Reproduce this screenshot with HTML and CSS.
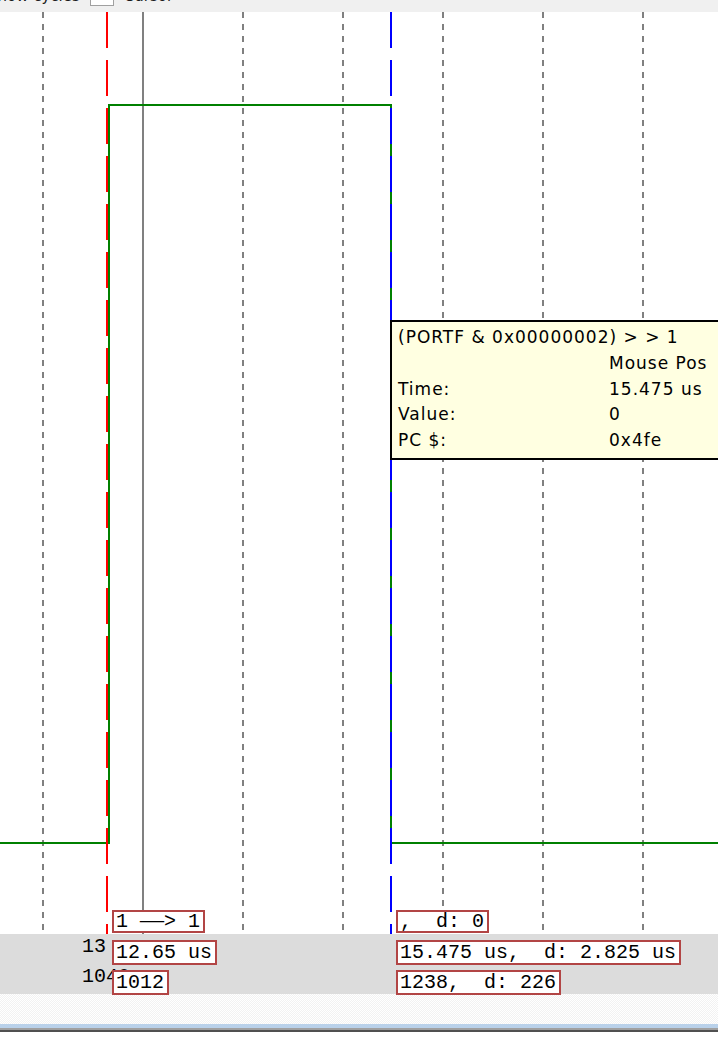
FILE: index.html
```html
<!DOCTYPE html>
<html>
<head>
<meta charset="utf-8">
<link rel="stylesheet" href="styles.css">
</head>
<body>
<div class="screen">
  <div class="toolbar">
    <span class="tb-label tb-first">Show cycles</span>
    <span class="tb-check"></span>
    <span class="tb-label">Cursor</span>
  </div>
  <div class="scope">
    <div class="wave">
      <svg class="wave-svg" width="718" height="922" viewBox="0 0 718 922">
        <g stroke="#808080" stroke-width="2" stroke-dasharray="6 6">
          <line x1="43" y1="0" x2="43" y2="922"/>
          <line x1="243" y1="0" x2="243" y2="922"/>
          <line x1="343" y1="0" x2="343" y2="922"/>
          <line x1="443" y1="0" x2="443" y2="922"/>
          <line x1="543" y1="0" x2="543" y2="922"/>
          <line x1="643" y1="0" x2="643" y2="922"/>
        </g>
        <line x1="143" y1="0" x2="143" y2="922" stroke="#808080" stroke-width="2"/>
        <polyline points="0,831 109,831 109,93 391,93 391,831 718,831" fill="none" stroke="#008000" stroke-width="2"/>
        <line x1="107" y1="0" x2="107" y2="922" stroke="#ff0000" stroke-width="2" stroke-dasharray="36 12"/>
        <line x1="391" y1="0" x2="391" y2="922" stroke="#0000ff" stroke-width="2" stroke-dasharray="36 12"/>
      </svg>
    </div>
    <div class="band"></div>

    <div class="axis-num num-time">13</div>
    <div class="axis-num num-cycle">1040</div>

    <div class="tag tag-left tag-row1">1 <span class="wide">—</span>&gt; 1</div>
    <div class="tag tag-left tag-row2">12.65 us</div>
    <div class="tag tag-left tag-row3">1012</div>

    <div class="tag tag-right tag-row1">,  d: 0</div>
    <div class="tag tag-right tag-row2">15.475 us,  d: 2.825 us</div>
    <div class="tag tag-right tag-row3">1238,  d: 226</div>

    <div class="tooltip">
      <div class="tt-title">(PORTF &amp; 0x00000002) &gt; &gt; 1</div>
      <div class="tt-key"></div><div class="tt-val">Mouse Pos</div>
      <div class="tt-key">Time:</div><div class="tt-val">15.475 us</div>
      <div class="tt-key">Value:</div><div class="tt-val">0</div>
      <div class="tt-key">PC $:</div><div class="tt-val">0x4fe</div>
    </div>
  </div>
  <div class="pattern"></div>
  <div class="frame">
    <div class="frame-blue"></div>
    <div class="frame-grey"></div>
    <div class="frame-dark"></div>
  </div>
</div>
</body>
</html>
```

FILE: styles.css
```css
html, body {
  margin: 0;
  padding: 0;
  background: #ffffff;
}
.screen {
  width: 718px;
  height: 1040px;
  overflow: hidden;
  display: flex;
  flex-direction: column;
}
.toolbar {
  height: 12px;
  flex: none;
  background: #f0f0f0;
  overflow: hidden;
  display: flex;
  align-items: flex-start;
  font-family: "DejaVu Sans", sans-serif;
  font-size: 15px;
  color: #1a1a1a;
}
.tb-label {
  line-height: 18px;
  margin-top: -13px;
}
.tb-first {
  margin-left: -12px;
}
.tb-check {
  width: 22px;
  height: 14px;
  margin: -9px 10px 0 10px;
  background: #ffffff;
  border: 1px solid #a0a0a0;
  border-top: 0;
}
.scope {
  position: relative;
  flex: none;
  display: flex;
  flex-direction: column;
}
.wave {
  height: 922px;
  background: #ffffff;
}
.wave-svg {
  display: block;
}
.band {
  height: 60px;
  background: #dcdcdc;
}
.axis-num, .tag {
  position: absolute;
  font-family: "Liberation Mono", monospace;
  font-size: 20px;
  line-height: 21px;
  white-space: pre;
  color: #000000;
}
.axis-num {
  left: 82px;
}
.num-time { top: 924px; }
.num-cycle { top: 954px; }
.tag {
  background: #ffffff;
  border: 2px solid #b24545;
  padding: 0 3px 0 2px;
}
.tag-left { left: 112px; }
.tag-right { left: 396px; }
.tag-row1 { top: 898px; height: 19px; line-height: 19px; }
.tag-row2 { top: 928px; }
.tag-row3 { top: 958px; }
.wide {
  display: inline-block;
  width: 24px;
  transform: scaleX(2);
  transform-origin: left center;
}
.tooltip {
  position: absolute;
  left: 390px;
  top: 308px;
  width: 360px;
  height: 133px;
  background: #ffffe1;
  border: 2px solid #000000;
  padding: 3px 0 0 6px;
  display: grid;
  grid-template-columns: 211px 1fr;
  grid-auto-rows: 25.8px;
  font-family: "DejaVu Sans", sans-serif;
  font-size: 17px;
  letter-spacing: 1px;
  line-height: 25.8px;
  color: #000000;
  white-space: nowrap;
}
.tt-title {
  grid-column: 1 / 3;
}
.pattern {
  height: 30px;
  flex: none;
  background: repeating-conic-gradient(#f2f2f2 0 25%, #ffffff 0 50%) 0 0 / 2px 2px;
}
.frame {
  flex: none;
  display: flex;
  flex-direction: column;
}
.frame-blue { height: 4px; background: #b9d1ea; }
.frame-grey { height: 2px; background: #a0a0a0; }
.frame-dark { height: 2px; background: #505050; }
```
